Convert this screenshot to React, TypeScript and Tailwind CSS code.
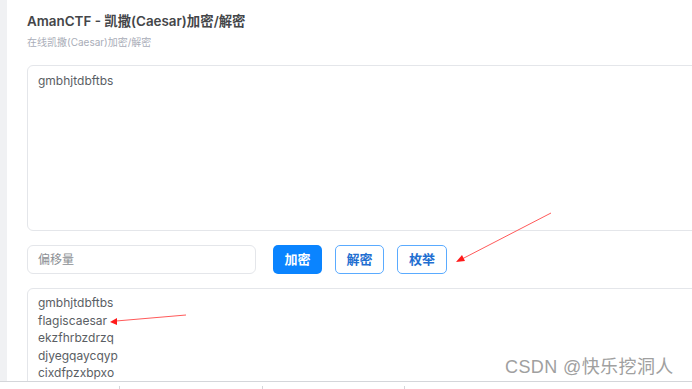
export default function App() {
  const results = ['gmbhjtdbftbs', 'flagiscaesar', 'ekzfhrbzdrzq', 'djyegqaycqyp', 'cixdfpzxbpxo'];

  return (
    <div
      className="relative w-[692px] h-[389px] overflow-hidden bg-white"
      style={{ fontFamily: "Inter, 'Noto Sans CJK SC', sans-serif" }}
    >
      <div className="flex h-[381px]">
        {/* left gutter */}
        <div className="w-[7px] shrink-0 bg-[#f0f1f3]" />

        {/* main panel */}
        <div className="flex-1 pl-[20px] pt-[12px]">
          <h1 className="text-[13.4px] leading-[18px] font-semibold text-[#444649]">
            AmanCTF - 凯撒(Caesar)加密/解密
          </h1>
          <p className="mt-[5px] text-[10px] leading-[14px] text-[#a9adb8]">在线凯撒(Caesar)加密/解密</p>

          {/* input text */}
          <div className="mt-[16px] w-[700px] h-[166px] rounded-[6px] border border-[#e4e6ea] px-[10px] pt-[6px] text-[12px] leading-[18px] text-[#5a5e64]">
            gmbhjtdbftbs
          </div>

          {/* controls */}
          <div className="mt-[14px] flex items-center h-[29px]">
            <div className="w-[229px] h-[29px] rounded-[6px] border border-[#e4e6ea] px-[10px] flex items-center text-[12px] text-[#8c8f94]">
              偏移量
            </div>
            <button className="ml-[17px] w-[49px] h-[29px] rounded-[5px] bg-[#0a84ff] text-white text-[13px] font-semibold">
              加密
            </button>
            <button className="ml-[13px] w-[49px] h-[29px] rounded-[5px] border border-[#5aabff] text-[#1f6fd1] text-[13px] font-semibold">
              解密
            </button>
            <button className="ml-[13px] w-[50px] h-[29px] rounded-[5px] border border-[#5aabff] text-[#1f6fd1] text-[13px] font-semibold">
              枚举
            </button>
          </div>

          {/* output */}
          <div className="mt-[14px] w-[700px] h-[120px] rounded-[6px] border border-[#e4e6ea] px-[10px] pt-[5px] text-[12px] leading-[17.5px] text-[#5a5e64]">
            {results.map((r) => (
              <div key={r}>{r}</div>
            ))}
          </div>
        </div>
      </div>

      {/* bottom strip */}
      <div className="relative h-[8px] border-t border-[#d4d6da] bg-white">
        <div className="absolute left-[119px] top-[4px] w-px h-[3px] bg-[#d4d6da]" />
        <div className="absolute left-[262px] top-[4px] w-px h-[3px] bg-[#d4d6da]" />
        <div className="absolute left-[404px] top-[4px] w-px h-[3px] bg-[#d4d6da]" />
      </div>

      {/* annotation arrows */}
      <svg className="absolute inset-0 pointer-events-none" width="692" height="389">
        <line x1="551" y1="213" x2="462" y2="259" stroke="#ff5a5a" strokeWidth="1" />
        <polygon points="456,262 462,255 465,261" fill="#ff1a1a" />
        <line x1="186" y1="315" x2="116" y2="321" stroke="#ff5a5a" strokeWidth="1" />
        <polygon points="110,322 117,318 117,325" fill="#ff1a1a" />
      </svg>

      {/* watermark */}
      <div
        className="absolute left-[505px] top-[357px] text-[18px] leading-[20px] text-[#a0a0a0] tracking-[0.4px]"
        style={{ fontFamily: "'Liberation Sans', 'Noto Sans CJK SC', sans-serif" }}
      >
        CSDN @快乐挖洞人
      </div>
    </div>
  );
}
